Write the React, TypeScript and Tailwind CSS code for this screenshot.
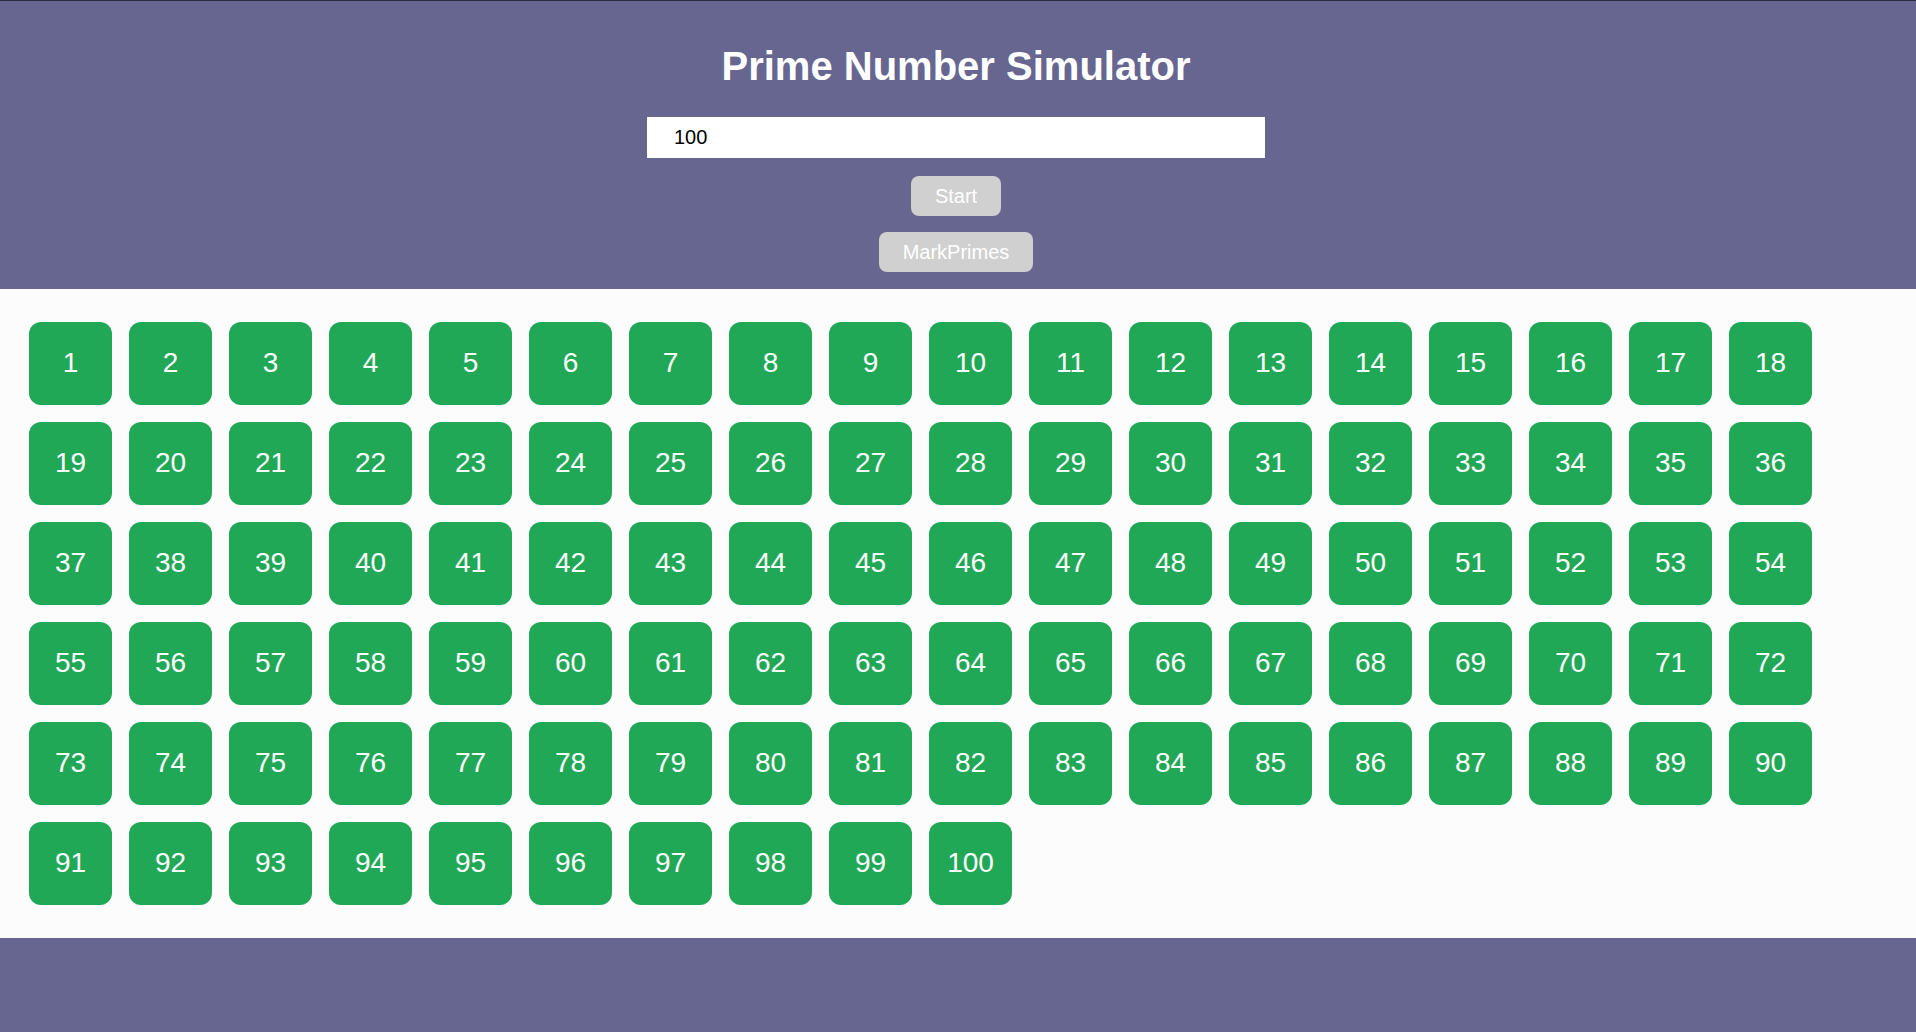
import React from "react";

export default function App() {
  const nums = Array.from({ length: 100 }, (_, i) => i + 1);
  return (
    <div
      className="min-h-[1032px] w-full bg-[#666690] border-t border-[#2a2a40]"
      style={{ fontFamily: '"Liberation Sans", Arial, sans-serif' }}
    >
      <header className="flex flex-col items-center pt-[42px] pb-[17px] pr-[4px]">
        <h1 className="text-[40px] leading-[46px] font-bold text-white">Prime Number Simulator</h1>
        <input
          readOnly
          value="100"
          className="mt-[28px] h-[41px] w-[618px] bg-white pl-[27px] pr-[23px] text-[20px] text-black outline-none"
        />
        <button className="mt-[18px] h-[40px] rounded-[8px] bg-[#d0d0d0] px-6 text-[20px] text-white">
          Start
        </button>
        <button className="mt-[16px] h-[40px] rounded-[8px] bg-[#d0d0d0] px-6 text-[20px] text-white">
          MarkPrimes
        </button>
      </header>
      <section className="bg-[#fcfcfd] pl-[29px] pt-[33px] pb-[33px]">
        <div className="grid grid-cols-[repeat(18,83px)] gap-[17px]">
          {nums.map((n) => (
            <div
              key={n}
              className="flex h-[83px] w-[83px] items-center justify-center rounded-[12px] bg-[#21a856] pb-[2px] text-[28px] text-white"
            >
              {n}
            </div>
          ))}
        </div>
      </section>
    </div>
  );
}
